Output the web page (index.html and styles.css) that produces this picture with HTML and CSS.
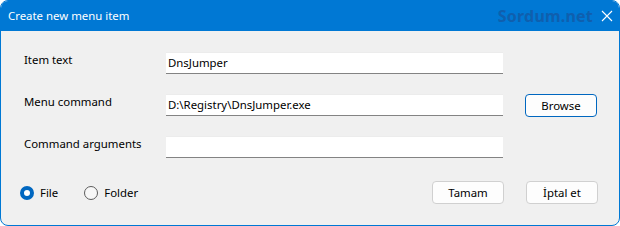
FILE: index.html
```html
<!DOCTYPE html>
<html>
<head>
<meta charset="utf-8">
<link rel="stylesheet" href="styles.css">
</head>
<body>
<div class="window">
  <div class="titlebar">
    <span class="title">Create new menu item</span>
    <span class="brand">Sordum.net</span>
    <svg class="close" width="12" height="12" viewBox="0 0 12 12"><path d="M1 1L11 11M11 1L1 11" stroke="#ffffff" stroke-width="1.1" fill="none"/></svg>
  </div>
  <div class="content">
    <div class="form">
      <div class="label">Item text</div>
      <div class="field">DnsJumper</div>
      <div></div>
      <div class="label">Menu command</div>
      <div class="field">D:\Registry\DnsJumper.exe</div>
      <button class="btn btn-default">Browse</button>
      <div class="label">Command arguments</div>
      <div class="field"></div>
      <div></div>
    </div>
    <div class="bottom">
      <div class="radios">
        <label class="radio"><span class="dot checked"></span>File</label>
        <label class="radio"><span class="dot"></span>Folder</label>
      </div>
      <div class="buttons">
        <button class="btn">Tamam</button>
        <button class="btn">İptal et</button>
      </div>
    </div>
  </div>
</div>
</body>
</html>
```
FILE: styles.css
```css
html, body {
  margin: 0;
  padding: 0;
  background: #ffffff;
}
body {
  font-family: "Noto Sans", "Open Sans", sans-serif;
  font-size: 11.4px;
  color: #000000;
}
.window {
  width: 620px;
  height: 226px;
  box-sizing: border-box;
  border: 1px solid #0078d4;
  border-radius: 8px;
  overflow: hidden;
  background: #f0f0f0;
  display: flex;
  flex-direction: column;
}
.titlebar {
  height: 30px;
  background: #0078d4;
  display: flex;
  align-items: center;
  padding: 0 6px 0 7px;
  color: #ffffff;
}
.title {
  flex: 1;
  padding-bottom: 1px;
}
.brand {
  font-weight: bold;
  font-size: 16px;
  color: #0f5fae;
  margin-right: 8px;
  letter-spacing: 0.2px;
}
.close {
  display: block;
}
.content {
  flex: 1;
  padding: 21px 21px 0 23px;
}
.form {
  display: grid;
  grid-template-columns: 120px 337px 72px;
  column-gap: 22px;
  row-gap: 20px;
  grid-auto-rows: 22px;
}
.label {
  padding-top: 1px;
  line-height: 14px;
  white-space: nowrap;
}
.field {
  background: #ffffff;
  border-top: 1px solid #ececec;
  border-bottom: 1px solid #838383;
  box-sizing: border-box;
  height: 22px;
  line-height: 19px;
  padding-left: 2px;
}
.btn {
  font-family: inherit;
  font-size: 11.4px;
  height: 23px;
  width: 72px;
  box-sizing: border-box;
  background: #fdfdfd;
  border: 1px solid #d0d0d0;
  border-radius: 4px;
  padding: 0;
  color: #000000;
}
.btn-default {
  border-color: #0067c0;
}
.bottom {
  display: flex;
  justify-content: space-between;
  align-items: center;
  margin-top: 23px;
  margin-left: -4px;
}
.radios {
  display: flex;
}
.radio {
  display: flex;
  align-items: center;
  margin-right: 26px;
}
.dot {
  width: 14px;
  height: 14px;
  box-sizing: border-box;
  border-radius: 50%;
  border: 1px solid #5c5c5c;
  background: #f7f7f7;
  margin-right: 6px;
}
.dot.checked {
  border: 4px solid #0067c0;
  background: #ffffff;
}
.buttons {
  display: flex;
  gap: 22px;
}
```
